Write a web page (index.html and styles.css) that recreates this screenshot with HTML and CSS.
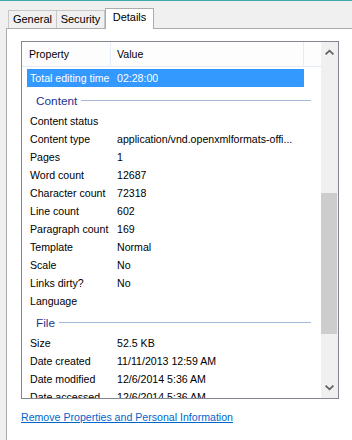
FILE: index.html
```html
<!DOCTYPE html>
<html>
<head>
<meta charset="utf-8">
<link rel="stylesheet" href="styles.css">
</head>
<body>
<div class="topline"></div>
<div class="tabbar">
  <div class="tab tab-general">General</div>
  <div class="tab tab-security">Security</div>
  <div class="tab tab-details active">Details</div>
</div>
<div class="panel">
  <div class="listbox">
    <div class="list">
      <div class="header">
        <div class="hcell c1">Property</div>
        <div class="hcell c2">Value</div>
        <div class="hcell c3"></div>
      </div>
      <div class="rows">
        <div class="row selected"><span class="k">Total editing time</span><span class="v">02:28:00</span></div>
        <div class="group first"><span class="gtext">Content</span><i class="gline"></i></div>
        <div class="row"><span class="k">Content status</span><span class="v"></span></div>
        <div class="row"><span class="k">Content type</span><span class="v">application/vnd.openxmlformats-offi...</span></div>
        <div class="row"><span class="k">Pages</span><span class="v">1</span></div>
        <div class="row"><span class="k">Word count</span><span class="v">12687</span></div>
        <div class="row"><span class="k">Character count</span><span class="v">72318</span></div>
        <div class="row"><span class="k">Line count</span><span class="v">602</span></div>
        <div class="row"><span class="k">Paragraph count</span><span class="v">169</span></div>
        <div class="row"><span class="k">Template</span><span class="v">Normal</span></div>
        <div class="row"><span class="k">Scale</span><span class="v">No</span></div>
        <div class="row"><span class="k">Links dirty?</span><span class="v">No</span></div>
        <div class="row"><span class="k">Language</span><span class="v"></span></div>
        <div class="group"><span class="gtext">File</span><i class="gline"></i></div>
        <div class="row"><span class="k">Size</span><span class="v">52.5 KB</span></div>
        <div class="row"><span class="k">Date created</span><span class="v">11/11/2013 12:59 AM</span></div>
        <div class="row"><span class="k">Date modified</span><span class="v">12/6/2014 5:36 AM</span></div>
        <div class="row"><span class="k">Date accessed</span><span class="v">12/6/2014 5:36 AM</span></div>
      </div>
    </div>
    <div class="scrollbar">
      <div class="sbtn">
        <svg width="17" height="17" viewBox="0 0 17 17"><polyline points="4.6,12.4 8.5,8.7 12.4,12.4" fill="none" stroke="#606060" stroke-width="1.8"/></svg>
      </div>
      <div class="track"><div class="thumb"></div></div>
      <div class="sbtn">
        <svg width="17" height="17" viewBox="0 0 17 17"><polyline points="4.6,4.6 8.5,8.3 12.4,4.6" fill="none" stroke="#606060" stroke-width="1.8"/></svg>
      </div>
    </div>
  </div>
  <a class="link" href="#">Remove Properties and Personal Information</a>
</div>
</body>
</html>
```
FILE: styles.css
```css
html, body {
  margin: 0;
  padding: 0;
}
body {
  width: 352px;
  height: 440px;
  overflow: hidden;
  background: #f0f0f0;
  font-family: "Liberation Sans", Arial, sans-serif;
  font-size: 10.6px;
  color: #000;
}
.topline {
  height: 1px;
  background: #3ea8aa;
}
.tabbar {
  height: 27px;
  display: flex;
  align-items: flex-end;
  padding-left: 8px;
}
.tab {
  box-sizing: border-box;
  height: 18px;
  border: 1px solid #c8c8c8;
  border-bottom: none;
  background: #f0f0f0;
  line-height: 17px;
  text-align: center;
  font-size: 11px;
}
.tab-general { width: 49px; }
.tab-security { width: 48px; border-left: none; }
.tab-details { width: 49px; }
.tab.active {
  position: relative;
  z-index: 2;
  height: 21px;
  margin-bottom: -1px;
  background: #fff;
  border-color: #acacac;
  line-height: 16px;
}
.panel {
  position: relative;
  z-index: 1;
  height: 420px;
  margin-left: 6px;
  background: #fff;
  border-top: 1px solid #acacac;
  border-left: 1px solid #acacac;
  padding: 12px 0 0 14px;
}
.listbox {
  box-sizing: border-box;
  width: 318px;
  height: 358px;
  border: 1px solid #828790;
  display: flex;
}
.list {
  width: 299px;
  height: 356px;
  overflow: hidden;
  background: #fff;
}
.header {
  display: flex;
  height: 24px;
  border-bottom: 1px solid #e2eaf6;
  background: #fdfdfd;
}
.hcell {
  box-sizing: border-box;
  height: 24px;
  line-height: 24px;
  white-space: nowrap;
}
.c1 {
  width: 89px;
  padding-left: 7px;
  border-right: 1px solid #e5ecf5;
}
.c2 {
  width: 193px;
  padding-left: 6px;
  border-right: 1px solid #e5ecf5;
}
.c3 { flex: 1; }
.rows {
  padding-top: 2px;
}
.row {
  display: flex;
  box-sizing: border-box;
  height: 18px;
  line-height: 18px;
  width: 277px;
  margin-left: 5px;
  white-space: nowrap;
}
.row .k {
  box-sizing: border-box;
  width: 83px;
  padding-left: 3px;
  flex: none;
}
.row .v {
  padding-left: 7px;
  overflow: hidden;
}
.row.selected {
  background: #3399ff;
  color: #fff;
  outline: 1px dotted #c8702e;
  outline-offset: -1px;
}
.group {
  display: flex;
  align-items: center;
  height: 24px;
  margin: 0 10px 0 14px;
  padding-top: 1px;
  box-sizing: border-box;
}
.group.first {
  margin-top: 1px;
}
.gtext {
  font-size: 11.8px;
  color: #1e3291;
  line-height: 14px;
}
.gline {
  flex: 1;
  height: 1px;
  margin-left: 4px;
  background: #a6b8d8;
}
.scrollbar {
  width: 17px;
  height: 356px;
  background: #f0f0f0;
  display: flex;
  flex-direction: column;
}
.sbtn {
  height: 17px;
  flex: none;
}
.sbtn svg {
  display: block;
}
.track {
  flex: 1;
}
.thumb {
  margin-top: 134px;
  width: 16px;
  height: 141px;
  background: #cdcdcd;
}
.link {
  display: block;
  margin-top: 11px;
  margin-left: 0;
  line-height: 14px;
  color: #0066cc;
  text-decoration: underline;
  white-space: nowrap;
}
```
